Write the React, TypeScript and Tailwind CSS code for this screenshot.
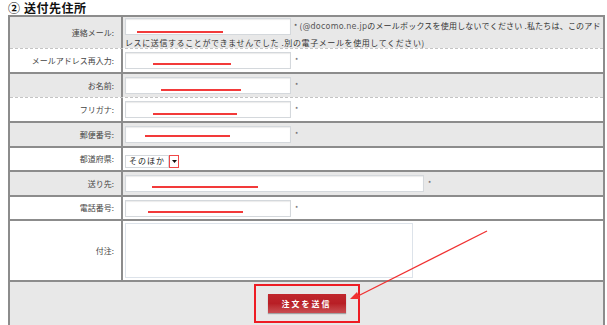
import React from "react";

const jp = { fontFamily: '"Noto Sans CJK JP", "Noto Sans", sans-serif' };

type Line = { left: number; width: number; top: number };

const TextBox = ({ w = 166, line }: { w?: number; line?: Line }) => (
  <div
    className="relative h-[17px] shrink-0 border border-[#d4d8dc] bg-white shadow-[inset_0_1px_1px_rgba(0,0,0,0.08)]"
    style={{ width: w }}
  >
    {line && (
      <span
        className="absolute h-[2px] bg-[#f23a3a]"
        style={{ left: line.left, width: line.width, top: line.top }}
      />
    )}
  </div>
);

const Star = ({ className = "" }: { className?: string }) => (
  <span className={"ml-[4px] text-[7px] text-[#555] " + className}>*</span>
);

const Row = ({
  label,
  h,
  bg,
  border,
  children,
}: {
  label: string;
  h: number;
  bg: string;
  border: "solid" | "dashed";
  children?: React.ReactNode;
}) => (
  <div
    className={
      "grid grid-cols-[113px_1fr] box-border " +
      bg +
      (border === "solid"
        ? " border-t-2 border-[#8c8c8c]"
        : " border-t border-dashed border-[#c4c4c4]")
    }
    style={{ height: h }}
  >
    <div className="flex items-center justify-end border-r-2 border-[#8c8c8c] pr-[7px] text-[8px] text-[#444]">
      {label}:
    </div>
    <div className="flex items-center pl-[2px]">{children}</div>
  </div>
);

export default function App() {
  return (
    <div className="relative h-[325px] w-[607px] overflow-hidden bg-white" style={jp}>
      <div className="flex h-[15px] items-center pl-[8px] pt-[1px] text-[12px] font-bold leading-[14px] text-[#111]">
        <span className="mr-[4px]">②</span>
        <span className="tracking-[0.5px]">送付先住所</span>
      </div>

      <div className="ml-[8px] w-[597px] border-x-2 border-[#8c8c8c]">
        {/* 連絡メール */}
        <div className="grid h-[33px] grid-cols-[113px_1fr] border-t-2 border-[#8c8c8c] bg-[#e8e8e8] box-border">
          <div className="flex items-center justify-end border-r-2 border-[#8c8c8c] pr-[7px] text-[8px] text-[#444]">
            連絡メール:
          </div>
          <div className="flex flex-col pl-[2px] pt-[1px] text-[8px] leading-none text-[#333]">
            <div className="flex items-center whitespace-nowrap">
              <TextBox line={{ left: 11, width: 86, top: 12 }} />
              <span className="ml-[3px] tracking-[0.2px]">
                <span className="text-[7px]">*</span> (
                <span className="text-[#555]" style={{ fontFamily: '"DejaVu Sans", sans-serif', fontSize: 8 }}>
                  @docomo.ne.jp
                </span>
                のメールボックスを使用しないでください .私たちは、このアド
              </span>
            </div>
            <div className="mt-[4px] whitespace-nowrap tracking-[0.6px]">
              レスに送信することができませんでした .別の電子メールを使用してください)
            </div>
          </div>
        </div>

        <Row label="メールアドレス再入力" h={24} bg="bg-white" border="dashed">
          <TextBox line={{ left: 27, width: 78, top: 10 }} />
          <Star />
        </Row>
        <Row label="お名前" h={25} bg="bg-[#e8e8e8]" border="solid">
          <TextBox line={{ left: 35, width: 80, top: 11 }} />
          <Star />
        </Row>
        <Row label="フリガナ" h={24} bg="bg-white" border="dashed">
          <TextBox line={{ left: 27, width: 84, top: 11 }} />
          <Star />
        </Row>
        <Row label="郵便番号" h={25} bg="bg-[#e8e8e8]" border="solid">
          <TextBox line={{ left: 19, width: 85, top: 8 }} />
          <Star />
        </Row>
        <Row label="都道府県" h={24} bg="bg-white" border="solid">
          <div className="mt-[4px] flex h-[13px] items-stretch">
            <div className="flex w-[44px] items-center border border-[#d4d8dc] bg-white pl-[3px] text-[8px] tracking-[1px] text-[#222]">
              そのほか
            </div>
            <div className="flex w-[10px] items-center justify-center border border-[#f04848] bg-white">
              <svg width="5" height="3" viewBox="0 0 5 3">
                <path d="M0 0h5L2.5 3z" fill="#111" />
              </svg>
            </div>
          </div>
        </Row>
        <Row label="送り先" h={25} bg="bg-[#e8e8e8]" border="solid">
          <TextBox w={299} line={{ left: 26, width: 106, top: 10 }} />
          <Star />
        </Row>
        <Row label="電話番号" h={24} bg="bg-white" border="solid">
          <TextBox line={{ left: 22, width: 95, top: 10 }} />
          <Star />
        </Row>

        {/* 付注 */}
        <div className="grid h-[61px] grid-cols-[113px_1fr] border-t-2 border-[#8c8c8c] bg-white box-border">
          <div className="flex items-center justify-end border-r-2 border-[#8c8c8c] pr-[7px] text-[8px] text-[#444]">
            付注:
          </div>
          <div className="flex items-center pl-[2px]">
            <div className="h-[55px] w-[288px] border border-[#dde3ea] bg-white" />
          </div>
        </div>

        {/* 送信 */}
        <div className="flex h-[50px] justify-center border-t-2 border-[#8c8c8c] bg-[#e8e8e8] pt-[2px]">
          <div className="flex h-[39px] w-[106px] items-center justify-center border-2 border-[#ee1c24]">
            <button className="flex h-[19px] w-[78px] items-center justify-center bg-gradient-to-b from-[#c0272d] via-[#b81e25] to-[#c94c52] text-[8px] font-bold tracking-[2px] text-white shadow-[0_1px_1px_rgba(0,0,0,0.3)]">
              注文を送信
            </button>
          </div>
        </div>
      </div>

      {/* annotation arrow */}
      <svg className="pointer-events-none absolute left-0 top-0" width="607" height="325">
        <line x1="487" y1="231" x2="356" y2="297" stroke="#f03030" strokeWidth="1.3" />
        <path d="M350 299 L357 292 L360 299 Z" fill="#f03030" />
      </svg>
    </div>
  );
}
